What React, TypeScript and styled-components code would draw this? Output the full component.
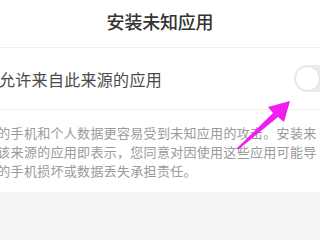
import styled, { createGlobalStyle } from "styled-components";

const GlobalStyle = createGlobalStyle`
  html, body {
    margin: 0;
    padding: 0;
    background: #f5f5f5;
  }
  body {
    font-family: "Noto Sans CJK SC", "Noto Sans", sans-serif;
  }
`;

const Screen = styled.div`
  position: relative;
  width: 320px;
  height: 240px;
  overflow: hidden;
  background: #f5f5f5;
`;

const Header = styled.div`
  height: 47px;
  display: flex;
  align-items: center;
  justify-content: center;
  background: #fff;
  border-bottom: 1px solid #efefef;
`;

const Title = styled.h1`
  margin: 0 0 5px 0;
  font-size: 18px;
  font-weight: 500;
  letter-spacing: -0.2px;
  color: #333;
`;

const Row = styled.div`
  height: 61px;
  display: flex;
  align-items: center;
  justify-content: space-between;
  background: #fff;
  border-bottom: 1px solid #efefef;
`;

const Label = styled.span`
  margin-left: -1px;
  font-size: 16px;
  letter-spacing: 0.3px;
  color: #4a4a4a;
`;

const Track = styled.div<{ $on?: boolean }>`
  width: 52px;
  height: 27px;
  margin-right: -26px;
  border-radius: 14px;
  background: ${(p) => (p.$on ? "#2f8cf0" : "#ebebeb")};
  display: flex;
  align-items: center;
  padding: 0 2px;
  box-sizing: border-box;
`;

const Knob = styled.div`
  width: 23px;
  height: 23px;
  border-radius: 50%;
  background: #fff;
  box-shadow: 0 0 0 1px #e2e2e2;
`;

const Notice = styled.div`
  background: #fff;
  padding: 13px 0 12px;
`;

const Line = styled.div`
  margin-left: -16px;
  white-space: nowrap;
  font-size: 13px;
  line-height: 19px;
  letter-spacing: 0.3px;
  color: #9a9a9a;
`;

const Arrow = styled.svg`
  position: absolute;
  left: 0;
  top: 0;
  pointer-events: none;
`;

const lines = [
  "您的手机和个人数据更容易受到未知应用的攻击。安装来",
  "自该来源的应用即表示，您同意对因使用这些应用可能导",
  "致的手机损坏或数据丢失承担责任。",
];

const App = () => {
  return (
    <Screen>
      <GlobalStyle />
      <Header>
        <Title>安装未知应用</Title>
      </Header>
      <Row>
        <Label>允许来自此来源的应用</Label>
        <Track>
          <Knob />
        </Track>
      </Row>
      <Notice>
        {lines.map((l) => (
          <Line key={l}>{l}</Line>
        ))}
      </Notice>
      <Arrow width="320" height="240" viewBox="0 0 320 240">
        <polygon
          points="236,149 273,113 268,107 290,101 284,122 278,117 239,149"
          fill="#f01ef0"
        />
      </Arrow>
    </Screen>
  );
};

export default App;
